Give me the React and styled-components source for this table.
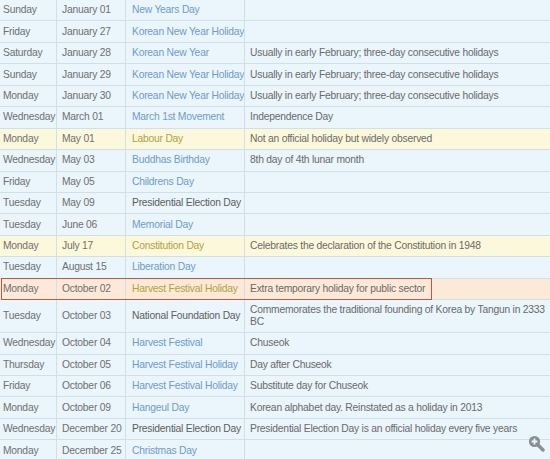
import React from "react";
import styled, { createGlobalStyle } from "styled-components";

const GlobalStyle = createGlobalStyle`
  html, body {
    margin: 0;
    padding: 0;
    background: #eaf5fc;
  }
  body {
    font-family: "Liberation Sans", Arial, sans-serif;
    font-size: 10.3px;
    letter-spacing: -0.22px;
    overflow: hidden;
  }
`;

const rowBg = {
  plain: "#eaf5fc",
  yellow: "#fcf8dc",
  peach: "#fde9d7",
};

const nameColor = {
  blue: "#6e9cc9",
  dark: "#5e5e5e",
  gold: "#b3a13f",
};

const holidays = [
  { day: "Sunday", date: "January 01", name: "New Years Day", tone: "blue" },
  { day: "Friday", date: "January 27", name: "Korean New Year Holiday", tone: "blue" },
  { day: "Saturday", date: "January 28", name: "Korean New Year", tone: "blue", note: "Usually in early February; three-day consecutive holidays" },
  { day: "Sunday", date: "January 29", name: "Korean New Year Holiday", tone: "blue", note: "Usually in early February; three-day consecutive holidays" },
  { day: "Monday", date: "January 30", name: "Korean New Year Holiday", tone: "blue", note: "Usually in early February; three-day consecutive holidays" },
  { day: "Wednesday", date: "March 01", name: "March 1st Movement", tone: "blue", note: "Independence Day" },
  { day: "Monday", date: "May 01", name: "Labour Day", tone: "gold", row: "yellow", note: "Not an official holiday but widely observed" },
  { day: "Wednesday", date: "May 03", name: "Buddhas Birthday", tone: "blue", note: "8th day of 4th lunar month" },
  { day: "Friday", date: "May 05", name: "Childrens Day", tone: "blue" },
  { day: "Tuesday", date: "May 09", name: "Presidential Election Day", tone: "dark" },
  { day: "Tuesday", date: "June 06", name: "Memorial Day", tone: "blue" },
  { day: "Monday", date: "July 17", name: "Constitution Day", tone: "gold", row: "yellow", note: "Celebrates the declaration of the Constitution in 1948" },
  { day: "Tuesday", date: "August 15", name: "Liberation Day", tone: "blue" },
  { day: "Monday", date: "October 02", name: "Harvest Festival Holiday", tone: "gold", row: "peach", note: "Extra temporary holiday for public sector", marked: true },
  { day: "Tuesday", date: "October 03", name: "National Foundation Day", tone: "dark", note: "Commemorates the traditional founding of Korea by Tangun in 2333 BC" },
  { day: "Wednesday", date: "October 04", name: "Harvest Festival", tone: "blue", note: "Chuseok" },
  { day: "Thursday", date: "October 05", name: "Harvest Festival Holiday", tone: "blue", note: "Day after Chuseok" },
  { day: "Friday", date: "October 06", name: "Harvest Festival Holiday", tone: "blue", note: "Substitute day for Chuseok" },
  { day: "Monday", date: "October 09", name: "Hangeul Day", tone: "blue", note: "Korean alphabet day. Reinstated as a holiday in 2013" },
  { day: "Wednesday", date: "December 20", name: "Presidential Election Day", tone: "dark", note: "Presidential Election Day is an official holiday every five years" },
  { day: "Monday", date: "December 25", name: "Christmas Day", tone: "blue" },
];

const Page = styled.div`
  position: relative;
  width: 550px;
  height: 459px;
  overflow: hidden;
`;

const Table = styled.div`
  display: flex;
  flex-direction: column;
`;

const Row = styled.div`
  position: relative;
  display: grid;
  grid-template-columns: 57px 69px 119px 1fr;
  min-height: 21.45px;
  background: ${(p) => rowBg[p.$tone] || rowBg.plain};
  border-bottom: 1px solid #d3dfe7;
  box-sizing: border-box;
`;

const Cell = styled.div`
  display: flex;
  align-items: center;
  padding: 4px ${(p) => p.$right || 2}px 4px ${(p) => p.$pad || 3}px;
  color: ${(p) => p.$color || "#707070"};
  border-right: ${(p) => (p.$last ? "none" : "1px solid #d3dfe7")};
  line-height: 12px;
  white-space: ${(p) => (p.$wrap ? "normal" : "nowrap")};
  overflow: hidden;
`;

const Marker = styled.div`
  position: absolute;
  left: 1px;
  top: -1px;
  bottom: -1px;
  width: 431px;
  border: 1px solid #b65a4c;
  box-sizing: border-box;
  pointer-events: none;
`;

const ZoomIcon = styled.svg`
  position: absolute;
  right: 5px;
  bottom: 7px;
`;

function HolidayRow({ item }) {
  return (
    <Row $tone={item.row}>
      <Cell $pad={3}>{item.day}</Cell>
      <Cell $pad={5}>{item.date}</Cell>
      <Cell $pad={6} $color={nameColor[item.tone]}>{item.name}</Cell>
      <Cell $pad={5} $right={4} $color="#6a6a6a" $last $wrap>
        {item.note || ""}
      </Cell>
      {item.marked && <Marker />}
    </Row>
  );
}

export default function App() {
  return (
    <Page>
      <GlobalStyle />
      <Table>
        {holidays.map((h) => (
          <HolidayRow key={h.date} item={h} />
        ))}
      </Table>
      <ZoomIcon width="17" height="17" viewBox="0 0 17 17">
        <line x1="9" y1="9" x2="15" y2="15" stroke="#8a8f93" strokeWidth="3.4" strokeLinecap="round" />
        <circle cx="6.5" cy="6.5" r="5.6" fill="#8a8f93" />
        <path d="M6.5 3.6v5.8M3.6 6.5h5.8" stroke="#eef5f9" strokeWidth="1.8" />
      </ZoomIcon>
    </Page>
  );
}
